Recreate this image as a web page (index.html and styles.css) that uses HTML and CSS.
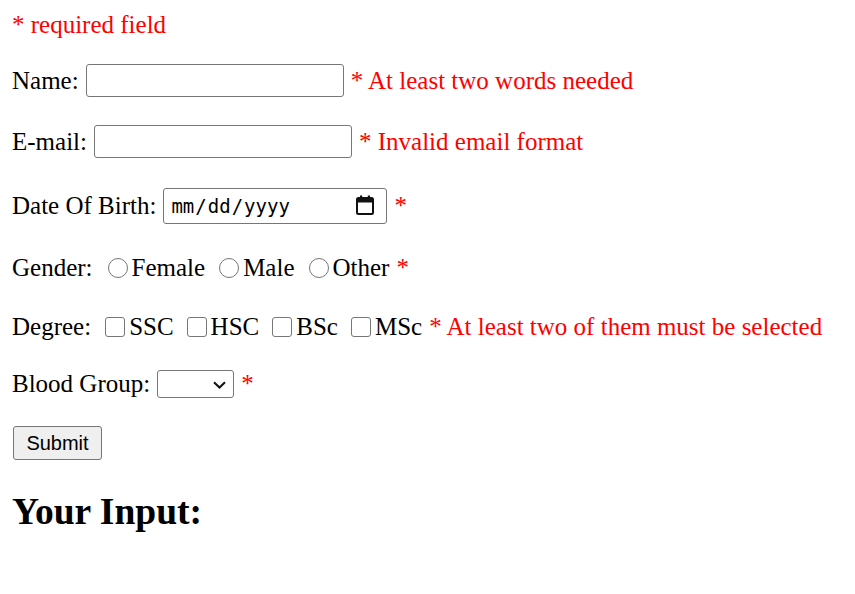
FILE: index.html
```html
<!DOCTYPE html>
<html lang="en">
<head>
<meta charset="utf-8">
<title>Form</title>
<link rel="stylesheet" href="styles.css">
</head>
<body>
<div class="page">
  <p class="note"><span class="error">* required field</span></p>
  <form class="form">
    <div class="row">
      <span class="label">Name:</span>
      <input class="text-input" type="text" name="name">
      <span class="error msg">* At least two words needed</span>
    </div>
    <div class="row">
      <span class="label">E-mail:</span>
      <input class="text-input" type="text" name="email">
      <span class="error msg">* Invalid email format</span>
    </div>
    <div class="row">
      <span class="label">Date Of Birth:</span>
      <span class="date-wrap">
        <input class="date-input" type="date" name="dob">
        <svg class="calendar" width="18" height="20" viewBox="0 0 18 20" aria-hidden="true">
          <rect x="1" y="3" width="16" height="16" rx="1.5" fill="none" stroke="#111111" stroke-width="2"/>
          <rect x="1" y="3" width="16" height="4.5" fill="#111111"/>
          <rect x="4" y="0.5" width="2.2" height="4" fill="#111111"/>
          <rect x="11.8" y="0.5" width="2.2" height="4" fill="#111111"/>
        </svg>
      </span>
      <span class="error msg">*</span>
    </div>
    <div class="row">
      <span class="label">Gender:</span>
      <input class="radio" type="radio" name="gender"><span class="opt">Female</span>
      <input class="radio" type="radio" name="gender"><span class="opt">Male</span>
      <input class="radio" type="radio" name="gender"><span class="opt">Other</span>
      <span class="error msg">*</span>
    </div>
    <div class="row">
      <span class="label">Degree:</span>
      <input class="check" type="checkbox"><span class="opt">SSC</span>
      <input class="check" type="checkbox"><span class="opt">HSC</span>
      <input class="check" type="checkbox"><span class="opt">BSc</span>
      <input class="check" type="checkbox"><span class="opt">MSc</span>
      <span class="error msg">* At least two of them must be selected</span>
    </div>
    <div class="row">
      <span class="label">Blood Group:</span>
      <span class="select-wrap">
        <select class="select" name="blood">
          <option></option>
          <option>A+</option>
          <option>A-</option>
          <option>B+</option>
          <option>B-</option>
          <option>O+</option>
          <option>O-</option>
          <option>AB+</option>
          <option>AB-</option>
        </select>
        <svg class="chevron" width="13" height="8" viewBox="0 0 13 8" aria-hidden="true">
          <path d="M1 1.2 L6.5 6.5 L12 1.2" fill="none" stroke="#111111" stroke-width="2"/>
        </svg>
      </span>
      <span class="error msg">*</span>
    </div>
    <div class="row">
      <button class="submit" type="submit">Submit</button>
    </div>
  </form>
  <h2 class="heading">Your Input:</h2>
</div>
</body>
</html>
```
FILE: styles.css
```css
html, body {
  margin: 0;
  padding: 0;
  background: #ffffff;
}

.page {
  padding: 11px 12px 0 12px;
  font-family: "Liberation Serif", "Times New Roman", serif;
  font-size: 25px;
  color: #000000;
}

.note {
  margin: 0;
  line-height: 28px;
}

.error {
  color: #ff0000;
}

.form {
  margin-top: 11px;
  display: grid;
  grid-template-rows: 61px 61px 67px 58px 60px 54px 64px;
}

.row {
  display: flex;
  align-items: center;
  line-height: 28px;
  white-space: nowrap;
}

.label {
  margin-right: 7px;
}

.msg {
  margin-left: 7px;
}

.opt {
  margin-right: 6px;
}

.opt + .msg {
  margin-left: 1px;
}

.text-input {
  box-sizing: border-box;
  width: 258px;
  height: 33px;
  margin: 0;
  padding: 2px 4px;
  border: 1px solid #767676;
  border-radius: 3px;
  font-family: "Liberation Sans", Arial, sans-serif;
  font-size: 20px;
  background: #ffffff;
}

.date-wrap {
  position: relative;
  display: flex;
}

.date-input {
  box-sizing: border-box;
  width: 224px;
  height: 36px;
  margin: 0;
  padding: 2px 6px 2px 6px;
  border: 1px solid #767676;
  border-radius: 3px;
  font-family: "DejaVu Sans Mono", "Liberation Mono", monospace;
  font-size: 19px;
  color: #000000;
  background: #ffffff;
}

.date-input::-webkit-calendar-picker-indicator {
  width: 19px;
  height: 20px;
  padding: 0;
  margin: 0 2px 0 0;
  opacity: 0;
}

.calendar {
  position: absolute;
  right: 13px;
  top: 7px;
  pointer-events: none;
}

.radio {
  appearance: none;
  -webkit-appearance: none;
  box-sizing: border-box;
  width: 20px;
  height: 20px;
  margin: 0 4px 0 8px;
  border: 1px solid #767676;
  border-radius: 50%;
  background: #ffffff;
  flex: none;
}

.check {
  appearance: none;
  -webkit-appearance: none;
  box-sizing: border-box;
  width: 20px;
  height: 20px;
  margin: 0 4px 0 7px;
  border: 1px solid #767676;
  border-radius: 3px;
  background: #ffffff;
  flex: none;
}

.select-wrap {
  position: relative;
  display: flex;
}

.select {
  appearance: none;
  -webkit-appearance: none;
  box-sizing: border-box;
  width: 77px;
  height: 28px;
  margin: 0;
  border: 1px solid #767676;
  border-radius: 3px;
  font-family: "Liberation Sans", Arial, sans-serif;
  font-size: 20px;
  background: #ffffff;
}

.chevron {
  position: absolute;
  right: 8px;
  top: 11px;
  pointer-events: none;
}

.submit {
  box-sizing: border-box;
  width: 89px;
  height: 34px;
  margin: 0 0 0 1px;
  padding: 0;
  border: 1px solid #767676;
  border-radius: 3px;
  background: #efefef;
  font-family: "Liberation Sans", Arial, sans-serif;
  font-size: 20px;
  color: #000000;
}

.heading {
  margin: 16px 0 0 0;
  font-size: 37.5px;
  font-weight: bold;
  line-height: 41px;
}
```
